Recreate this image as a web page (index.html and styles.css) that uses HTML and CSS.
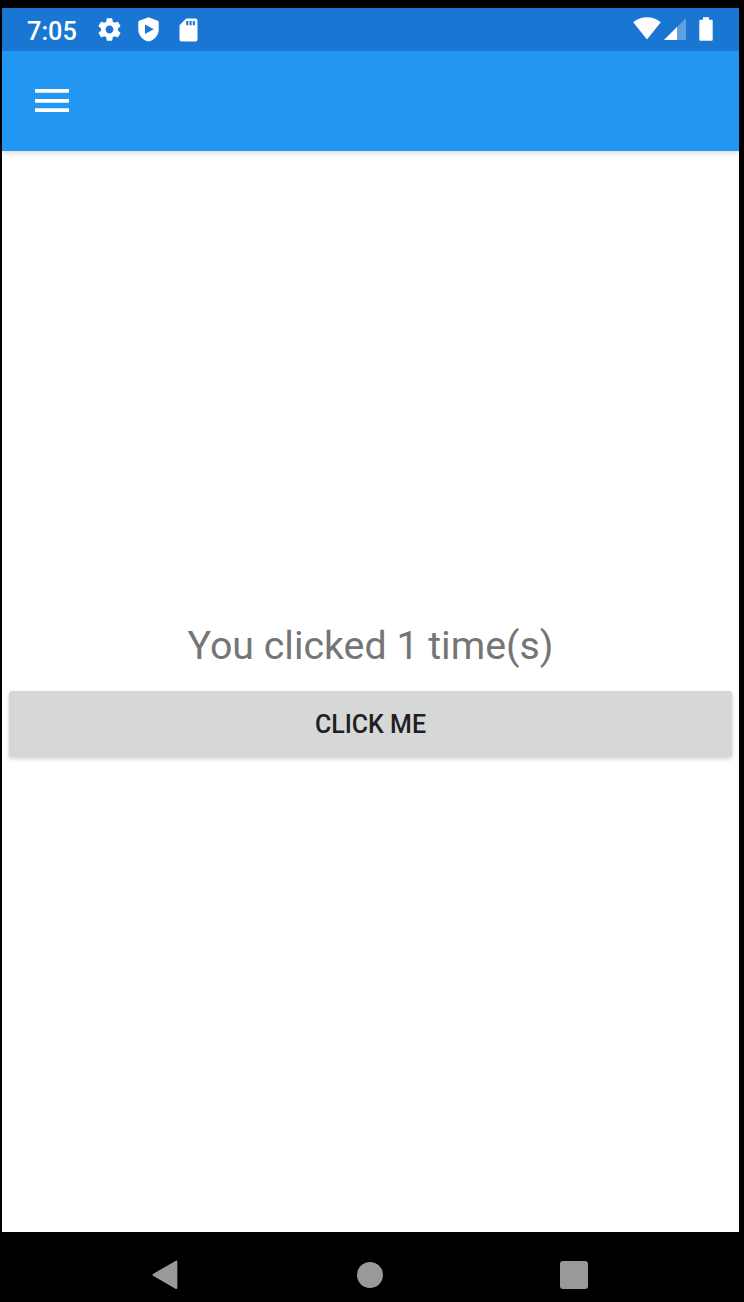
FILE: index.html
```html
<!DOCTYPE html>
<html lang="en">
<head>
<meta charset="utf-8">
<title>Click counter</title>
<link rel="stylesheet" href="styles.css">
</head>
<body>
<div class="screen">
  <header class="status">
    <span class="time">7:05</span>
    <div class="notices">
      <svg class="cog" viewBox="0 0 24 24"><path d="M19.43 12.98c.04-.32.07-.64.07-.98s-.03-.66-.07-.98l2.11-1.65c.19-.15.24-.42.12-.64l-2-3.46c-.12-.22-.39-.3-.61-.22l-2.49 1c-.52-.4-1.08-.73-1.69-.98l-.38-2.65C14.46 2.18 14.25 2 14 2h-4c-.25 0-.46.18-.49.42l-.38 2.65c-.61.25-1.17.59-1.69.98l-2.49-1c-.23-.09-.49 0-.61.22l-2 3.46c-.13.22-.07.49.12.64l2.11 1.65c-.04.32-.07.65-.07.98s.03.66.07.98l-2.11 1.65c-.19.15-.24.42-.12.64l2 3.46c.12.22.39.3.61.22l2.49-1c.52.4 1.08.73 1.69.98l.38 2.65c.03.24.24.42.49.42h4c.25 0 .46-.18.49-.42l.38-2.65c.61-.25 1.17-.59 1.69-.98l2.49 1c.23.09.49 0 .61-.22l2-3.46c.12-.22.07-.49-.12-.64l-2.11-1.65zM12 15.5c-1.93 0-3.5-1.57-3.5-3.5s1.57-3.5 3.5-3.5 3.5 1.57 3.5 3.5-1.57 3.5-3.5 3.5z"/></svg>
      <svg class="shield" viewBox="0 0 21 25"><path fill-rule="evenodd" d="M10.5.3 19.8 3.7Q20.7 4 20.7 5V12.5C20.7 18.5 16.2 23.2 10.5 24.6C4.8 23.2.3 18.5.3 12.5V5Q.3 4 1.2 3.700ZM7 7.500V16.900L15.800 12.200Z"/></svg>
      <svg class="card" viewBox="0 0 19 24"><path fill-rule="evenodd" d="M7.200.5H16.500Q18.500.5 18.500 2.500V21.400Q18.500 23.400 16.500 23.400H2.500Q.5 23.400.5 21.400V7.300ZM7.200 3V7.300H9.300V3ZM10.500 3V7.300H12.600V3ZM13.800 3V7.300H15.900V3Z"/></svg>
    </div>
    <div class="signals">
      <svg class="wifi" viewBox="0 0 28 23"><path d="M14 22.5.2 5.3C4.200 2 8.900.3 14 .3s9.800 1.700 13.800 5Z"/></svg>
      <svg class="cell" viewBox="0 0 22 22"><path class="faint" d="M22 0V22H0Z"/><path d="M13 9V22H0Z"/></svg>
      <svg class="battery" viewBox="0 0 14 24"><path d="M4 .3H10V2.800H12.600Q13.700 2.800 13.700 3.900V22.700Q13.700 23.800 12.600 23.800H1.400Q.3 23.800.3 22.700V3.900Q.3 2.800 1.400 2.800H4Z"/></svg>
    </div>
  </header>
  <div class="appbar">
    <svg class="menu" viewBox="0 0 34 24"><path d="M0 0H34V3.800H0ZM0 10H34V13.700H0ZM0 19.200H34V23H0Z"/></svg>
  </div>
  <main class="content">
    <p class="message">You clicked 1 time(s)</p>
    <button class="action">CLICK ME</button>
  </main>
</div>
<nav class="navbar">
  <svg class="back" viewBox="0 0 26 30"><path d="M23.500.9Q25.300 0 25.300 2V27.500Q25.300 29.600 23.500 28.700L1 15.700Q-.2 14.800 1 13.900Z"/></svg>
  <span class="home"></span>
  <span class="recent"></span>
</nav>
</body>
</html>
```
FILE: styles.css
```css
* {
  box-sizing: border-box;
}

body {
  margin: 0;
  height: 1302px;
  padding: 8px 5px 0 2px;
  background: #000;
  font-family: Roboto, "Liberation Sans", sans-serif;
  overflow: hidden;
}

svg {
  display: block;
  flex: none;
  fill: #fff;
}

.screen {
  display: flex;
  flex-direction: column;
  height: 1224px;
  background: #fff;
}

.status {
  display: flex;
  align-items: flex-start;
  height: 43px;
  padding: 0 26px 0 25px;
  background: #1976d2;
}

.time {
  width: 68.500px;
  padding-top: 2px;
  color: #fff;
  font-size: 25.300px;
  font-weight: 500;
  line-height: 43px;
}

.notices,
.signals {
  display: flex;
}

.cog {
  width: 27px;
  height: 27px;
  margin-top: 8px;
}

.shield {
  width: 21px;
  height: 25px;
  margin: 9.3px 0 0 15.300px;
}

.card {
  width: 19px;
  height: 24px;
  margin: 10px 0 0 20px;
}

.signals {
  margin-left: auto;
}

.wifi {
  width: 28px;
  height: 23px;
  margin: 9.300px -0.500px 0 0;
}

.cell {
  width: 22px;
  height: 22px;
  margin: 10.300px 0 0 4px;
}

.faint {
  fill-opacity: 0.3;
}

.battery {
  width: 14px;
  height: 24px;
  margin: 9px 0 0 13px;
}

.appbar {
  height: 100px;
  padding: 38px 0 0 33px;
  background: #2196f3;
  box-shadow: 0 1px 6px rgba(0, 0, 0, 0.2);
  clip-path: inset(0 0 -10px 0);
}

.menu {
  width: 34px;
  height: 24px;
}

.content {
  display: flex;
  flex: 1;
  flex-direction: column;
  justify-content: center;
  padding: 0 7px;
}

.message {
  margin: 0 0 21px;
  color: #757575;
  font-size: 39.350px;
  line-height: 47px;
  text-align: center;
}

.action {
  height: 66px;
  margin-bottom: 4px;
  padding: 1px 0 0;
  border: 0;
  border-radius: 3px;
  background: #d6d7d7;
  box-shadow: 0 2px 4px rgba(0, 0, 0, 0.18);
  color: #1f1f1f;
  font: 500 25px Roboto, "Liberation Sans", sans-serif;
}

.navbar {
  display: flex;
  align-items: center;
  height: 70px;
  padding: 16px 0 0 150px;
}

.back {
  width: 26px;
  height: 30px;
  fill: #999;
}

.home {
  width: 26px;
  height: 26px;
  margin-left: 179px;
  border-radius: 50%;
  background: #999;
}

.recent {
  width: 28px;
  height: 28px;
  margin-left: 177px;
  border-radius: 3px;
  background: #999;
}
```
